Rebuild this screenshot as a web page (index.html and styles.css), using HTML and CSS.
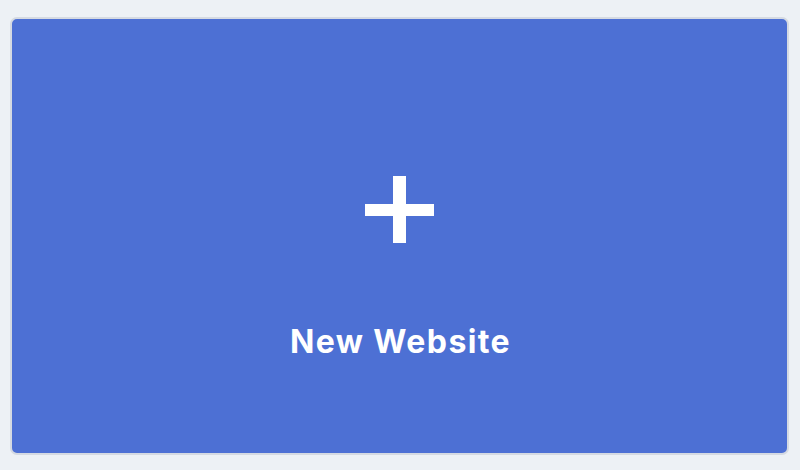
FILE: index.html
```html
<!DOCTYPE html>
<html>
<head>
<meta charset="utf-8">
<link rel="stylesheet" href="styles.css">
</head>
<body>
<div class="page">
  <div class="card">
    <svg class="plus" width="70" height="68" viewBox="0 0 70 68">
      <rect x="0" y="28" width="69" height="12" fill="#fff"/>
      <rect x="28" y="0" width="13" height="67" fill="#fff"/>
    </svg>
    <div class="label">New Website</div>
  </div>
</div>
</body>
</html>
```
FILE: styles.css
```css
html, body {
  margin: 0;
  padding: 0;
  background: #edf1f5;
  width: 800px;
  height: 470px;
  overflow: hidden;
}
.page {
  padding: 17px 11px 0 10px;
}
.card {
  box-sizing: border-box;
  width: 779px;
  height: 438px;
  background: #4d70d4;
  border: 2px solid #d5dae2;
  border-radius: 7px;
  display: flex;
  flex-direction: column;
  align-items: center;
  padding-top: 157px;
}
.plus {
  display: block;
  margin-left: 1px;
}
.label {
  margin-top: 78px;
  margin-left: 2px;
  color: #fff;
  font-family: "Inter", sans-serif;
  font-weight: 700;
  font-size: 32px;
  line-height: 40px;
  letter-spacing: 1.4px;
}
```
